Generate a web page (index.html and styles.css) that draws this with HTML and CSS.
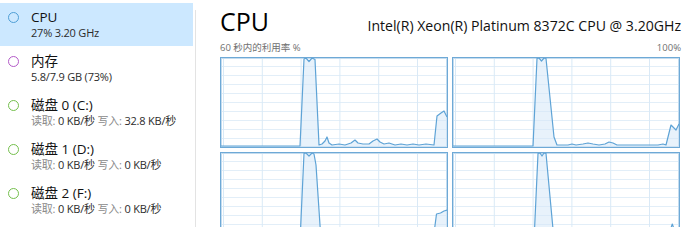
FILE: index.html
```html
<!DOCTYPE html>
<html lang="zh-CN">
<head>
<meta charset="utf-8">
<title>任务管理器 - CPU</title>
<link rel="stylesheet" href="styles.css">
</head>
<body>
<div class="app">
  <nav class="sidebar">
    <div class="item selected">
      <span class="dot dot-cpu"></span>
      <div class="texts">
        <div class="title">CPU</div>
        <div class="sub">27% 3.20 GHz</div>
      </div>
    </div>
    <div class="item">
      <span class="dot dot-mem"></span>
      <div class="texts">
        <div class="title">内存</div>
        <div class="sub">5.8/7.9 GB (73%)</div>
      </div>
    </div>
    <div class="item">
      <span class="dot dot-disk"></span>
      <div class="texts">
        <div class="title">磁盘 0 (C:)</div>
        <div class="sub"><span class="lbl">读取:</span> 0 KB/秒 <span class="lbl">写入:</span> 32.8 KB/秒</div>
      </div>
    </div>
    <div class="item">
      <span class="dot dot-disk"></span>
      <div class="texts">
        <div class="title">磁盘 1 (D:)</div>
        <div class="sub"><span class="lbl">读取:</span> 0 KB/秒 <span class="lbl">写入:</span> 0 KB/秒</div>
      </div>
    </div>
    <div class="item">
      <span class="dot dot-disk"></span>
      <div class="texts">
        <div class="title">磁盘 2 (F:)</div>
        <div class="sub"><span class="lbl">读取:</span> 0 KB/秒 <span class="lbl">写入:</span> 0 KB/秒</div>
      </div>
    </div>
  </nav>
  <div class="divider"></div>
  <main class="main">
    <div class="header">
      <h1 class="big">CPU</h1>
      <div class="model">Intel(R) Xeon(R) Platinum 8372C CPU @ 3.20GHz</div>
    </div>
    <div class="labels">
      <span>60 秒内的利用率 %</span>
      <span>100%</span>
    </div>
    <div class="charts">
      <div class="chart">
        <svg class="plot" viewBox="0 0 226 89" preserveAspectRatio="none">
          <path class="area" d="M0,88 L79,88 L83,1 L85,0 L88,3.5 L91,0 L94,1.5 L98,87 L101,86 L104,83 L106,79 L108,85 L111,87 L118,86 L124,87 L130,85 L134,82 L137,85 L142,86 L148,86 L152,83 L156,81 L159,84 L163,86 L168,85 L174,87 L180,86 L186,87 L192,86 L198,87 L205,86 L213,87 L216,58 L220,55 L223,53 L226,59 L226,89 L0,89 Z"/>
          <path class="line" d="M0,88 L79,88 L83,1 L85,0 L88,3.5 L91,0 L94,1.5 L98,87 L101,86 L104,83 L106,79 L108,85 L111,87 L118,86 L124,87 L130,85 L134,82 L137,85 L142,86 L148,86 L152,83 L156,81 L159,84 L163,86 L168,85 L174,87 L180,86 L186,87 L192,86 L198,87 L205,86 L213,87 L216,58 L220,55 L223,53 L226,59"/>
        </svg>
      </div>
      <div class="chart">
        <svg class="plot" viewBox="0 0 226 89" preserveAspectRatio="none">
          <path class="area" d="M0,88 L80,88 L84,0.5 L86,0 L88.5,3 L91,0 L93,0.5 L101,79 L104,87 L115,87 L119,86 L123,87 L130,86 L135,85 L140,86 L146,87 L152,86 L156,84 L160,85 L164,87 L190,87 L205,87 L210,86 L213,87 L218,67 L223,72 L226,66 L226,89 L0,89 Z"/>
          <path class="line" d="M0,88 L80,88 L84,0.5 L86,0 L88.5,3 L91,0 L93,0.5 L101,79 L104,87 L115,87 L119,86 L123,87 L130,86 L135,85 L140,86 L146,87 L152,86 L156,84 L160,85 L164,87 L190,87 L205,87 L210,86 L213,87 L218,67 L223,72 L226,66"/>
        </svg>
      </div>
      <div class="chart">
        <svg class="plot" viewBox="0 0 226 89" preserveAspectRatio="none">
          <path class="area" d="M0,88 L79,88 L83,0.5 L85,0 L88,3 L91,0 L93,1 L95,12 L100,87 L110,87 L140,86 L170,87 L200,86 L212,88 L215.5,61 L219.5,60 L223,58 L226,57 L226,89 L0,89 Z"/>
          <path class="line" d="M0,88 L79,88 L83,0.5 L85,0 L88,3 L91,0 L93,1 L95,12 L100,87 L110,87 L140,86 L170,87 L200,86 L212,88 L215.5,61 L219.5,60 L223,58 L226,57"/>
        </svg>
      </div>
      <div class="chart">
        <svg class="plot" viewBox="0 0 226 89" preserveAspectRatio="none">
          <path class="area" d="M0,88 L81,88 L85,0.5 L87,0 L89,3 L91,0 L93,0.5 L100,76 L103,87 L140,87 L180,86 L214,87 L219.3,71 L222,79 L226,84 L226,89 L0,89 Z"/>
          <path class="line" d="M0,88 L81,88 L85,0.5 L87,0 L89,3 L91,0 L93,0.5 L100,76 L103,87 L140,87 L180,86 L214,87 L219.3,71 L222,79 L226,84"/>
        </svg>
      </div>
    </div>
  </main>
</div>
</body>
</html>
```
FILE: styles.css
```css
html, body {
  margin: 0;
  padding: 0;
  background: #ffffff;
}
body {
  font-family: "Open Sans", "Noto Sans CJK SC", sans-serif;
  color: #1a1a1a;
  overflow: hidden;
}
.app {
  display: flex;
  width: 700px;
  height: 227px;
  overflow: hidden;
}
.sidebar {
  width: 193px;
  flex: none;
  padding-top: 3px;
}
.item {
  display: grid;
  grid-template-columns: 31px 1fr;
  height: 44px;
  box-sizing: border-box;
  padding-top: 6px;
}
.item.selected {
  background: #cce8ff;
  height: 43px;
  margin-bottom: 1px;
}
.dot {
  width: 9px;
  height: 9px;
  border-radius: 50%;
  border: 1.5px solid #4f9fd6;
  margin: 3px 0 0 8px;
  box-sizing: content-box;
  background: #ffffff;
}
.selected .dot { background: transparent; }
.dot-mem { border-color: #b35ac8; }
.dot-disk { border-color: #74bf4c; }
.title {
  font-size: 13.5px;
  line-height: 16px;
  color: #111;
}
.sub {
  font-size: 11px;
  line-height: 14px;
  margin-top: 1px;
  color: #2b2b2b;
  white-space: nowrap;
  letter-spacing: -0.2px;
}
.lbl { color: #8a8a8a; }
.divider {
  width: 1px;
  flex: none;
  margin: 10px 0 0 2px;
  background: #e3e3e3;
}
.main {
  flex: none;
  width: 461px;
  margin-left: 24px;
  padding-top: 6px;
}
.header {
  display: flex;
  justify-content: space-between;
  align-items: baseline;
}
.big {
  margin: 0;
  font-weight: normal;
  font-size: 25px;
  line-height: 30px;
  color: #000;
}
.model {
  font-size: 14.1px;
  color: #111;
  white-space: nowrap;
}
.labels {
  display: flex;
  justify-content: space-between;
  font-size: 9.5px;
  line-height: 13px;
  color: #707070;
  margin-top: 5px;
}
.charts {
  display: grid;
  grid-template-columns: 228px 228px;
  grid-auto-rows: 91px;
  gap: 4px;
  margin-top: 3px;
}
.chart {
  box-sizing: border-box;
  border: 1px solid #6ea9d6;
  box-shadow: inset 0 0 0 1px #c4dcef;
  background-color: #ffffff;
  background-image:
    linear-gradient(to right, #d9e9f6 1px, transparent 1px),
    linear-gradient(to bottom, #e2eef8 1px, transparent 1px);
  background-size: 38.8px 100%, 100% 9px;
  background-position: 2px 0, 0 8px;
}
.plot {
  display: block;
  width: 226px;
  height: 89px;
}
.area {
  fill: rgba(214, 232, 247, 0.55);
  stroke: none;
}
.line {
  fill: none;
  stroke: #5ea3d6;
  stroke-width: 1.2;
  stroke-linejoin: round;
}
```
